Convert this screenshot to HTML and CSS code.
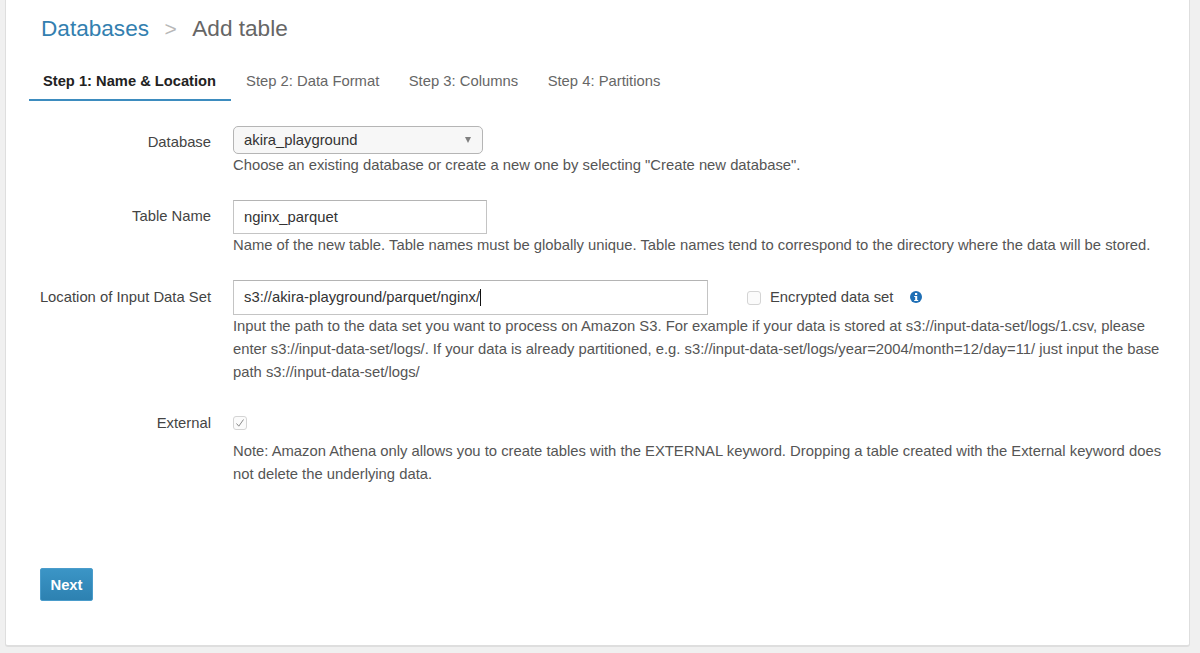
FILE: index.html
```html
<!DOCTYPE html>
<html lang="en">
<head>
  <meta charset="UTF-8">
  <meta name="viewport" content="width=device-width, initial-scale=1.0">
  <title>Add table</title>
  <link rel="stylesheet" href="styles.css">
</head>
<body>

<div class="panel">
  <div class="breadcrumb">
    <a class="crumb-link" href="#">Databases</a>
    <span class="crumb-sep">&gt;</span>
    <span class="crumb-current">Add table</span>
  </div>

  <div class="tabs">
    <div class="tab active">Step 1: Name &amp; Location</div>
    <div class="tab">Step 2: Data Format</div>
    <div class="tab">Step 3: Columns</div>
    <div class="tab">Step 4: Partitions</div>
  </div>

  <div class="form">
    <div class="row row-database">
      <div class="label">Database</div>
      <div class="field">
        <div class="select">
          <span>akira_playground</span>
          <span class="arrow"></span>
        </div>
        <p class="help">Choose an existing database or create a new one by selecting "Create new database".</p>
      </div>
    </div>

    <div class="row row-name">
      <div class="label">Table Name</div>
      <div class="field">
        <div class="input input-name">nginx_parquet</div>
        <p class="help">Name of the new table. Table names must be globally unique. Table names tend to correspond to the directory where the data will be stored.</p>
      </div>
    </div>

    <div class="row row-location">
      <div class="label">Location of Input Data Set</div>
      <div class="field">
        <div class="location-line">
          <div class="input input-location">s3://akira-playground/parquet/nginx/<span class="caret"></span></div>
          <span class="checkbox"></span>
          <span class="check-label">Encrypted data set</span>
          <svg class="info" width="12" height="12" viewBox="0 0 12 12">
            <circle cx="6" cy="6" r="6" fill="#1f6fb5"/>
            <rect x="5" y="2" width="2.2" height="2" fill="#fff"/>
            <path d="M4.2 5h3v4.1h1v1H4.2v-1h1V6h-1z" fill="#fff"/>
          </svg>
        </div>
        <p class="help">Input the path to the data set you want to process on Amazon S3. For example if your data is stored at s3://input-data-set/logs/1.csv, please enter s3://input-data-set/logs/. If your data is already partitioned, e.g. s3://input-data-set/logs/year=2004/month=12/day=11/ just input the base path s3://input-data-set/logs/</p>
      </div>
    </div>

    <div class="row row-external">
      <div class="label">External</div>
      <div class="field">
        <span class="checkbox checked">
          <svg width="10" height="10" viewBox="0 0 10 10">
            <path d="M1.5 5.5L3.8 8.2L8.5 1.5" fill="none" stroke="#8a8a8a" stroke-width="1"/>
          </svg>
        </span>
        <p class="help help-note">Note: Amazon Athena only allows you to create tables with the EXTERNAL keyword. Dropping a table created with the External keyword does not delete the underlying data.</p>
      </div>
    </div>
  </div>

  <button class="next" type="button">Next</button>
</div>

</body>
</html>
```

FILE: styles.css
```css
html, body {
  height: 100%;
}

body {
  font-family: "Liberation Sans", Arial, sans-serif;
  font-size: 14.8px;
  margin: 0;
  padding: 0 10px 6px 5px;
  box-sizing: border-box;
  background-color: #f0f0f0;
  color: #555555;
  overflow: hidden;
}

.panel {
  height: 100%;
  box-sizing: border-box;
  padding: 15px 0 0 0;
  background-color: #ffffff;
  border-right: 1px solid #dedede;
  border-bottom: 2px solid #dedede;
  border-left: 1px solid #dedede;
  border-radius: 0 0 3px 3px;
}

/* Breadcrumb */
.breadcrumb {
  display: flex;
  align-items: baseline;
  margin-left: 35px;
  font-size: 22.6px;
  line-height: 28px;
}

.crumb-link {
  color: #337fb0;
  text-decoration: none;
}

.crumb-sep {
  margin: 0 15.5px 0 15.5px;
  color: #b8b8b8;
  font-size: 21px;
}

.crumb-current {
  color: #666666;
}

/* Tabs */
.tabs {
  display: flex;
  margin: 18px 0 0 23px;
  height: 40px;
}

.tab {
  padding: 11px 14.5px 0 15px;
  line-height: 18px;
  color: #666666;
}

.tab.active {
  padding: 11px 15px 0 14px;
  font-size: 14.7px;
  font-weight: bold;
  color: #222222;
  border-bottom: 2px solid #3d8cbf;
  height: 27px;
}

/* Form rows */
.form {
  margin-top: 25px;
}

.row {
  display: grid;
  grid-template-columns: 205px 1fr;
  column-gap: 22px;
}

.row-name,
.row-location {
  margin-top: 23px;
}

.row-external {
  margin-top: 32px;
}

.label {
  text-align: right;
  color: #444444;
  line-height: 20px;
  padding-top: 6px;
}

.row-location .label {
  padding-top: 7px;
}

.row-external .label {
  padding-top: 0;
  line-height: 14px;
}

.field {
  min-width: 0;
  padding-right: 20px;
}

.help {
  margin: 0;
  line-height: 23px;
  color: #555555;
}

.help-note {
  margin-top: 10px;
}

/* Controls */
.select {
  display: flex;
  justify-content: space-between;
  align-items: center;
  width: 250px;
  height: 28px;
  box-sizing: border-box;
  padding: 0 10px;
  border: 1px solid #b5b5b5;
  border-radius: 5px;
  background-color: #f7f7f7;
  color: #333333;
}

.arrow {
  width: 0;
  height: 0;
  margin-right: 1px;
  border-left: 3px solid transparent;
  border-right: 3px solid transparent;
  border-top: 6px solid #808080;
}

.input {
  box-sizing: border-box;
  height: 35px;
  padding: 0 10px;
  line-height: 33px;
  border: 1px solid #c4c4c4;
  border-top-color: #b4b4b4;
  color: #333333;
}

.input-name {
  width: 254px;
  height: 34px;
  line-height: 32px;
}

.input-location {
  width: 475px;
}

.caret {
  display: inline-block;
  width: 1px;
  height: 17px;
  background-color: #111111;
  vertical-align: -4px;
}

.location-line {
  display: flex;
  align-items: center;
}

.checkbox {
  display: block;
  box-sizing: border-box;
  width: 14px;
  height: 14px;
  border: 1px solid #d4d4d4;
  border-radius: 3px;
  background-color: #fbfbfb;
}

.location-line .checkbox {
  margin-left: 39px;
}

.checkbox.checked {
  display: flex;
  align-items: center;
  justify-content: center;
}

.check-label {
  margin: 0 0 2px 9px;
  color: #444444;
}

.info {
  margin: 0 0 2px 17px;
}

.next {
  display: block;
  margin: 82px 0 0 34px;
  width: 53px;
  height: 33px;
  padding: 0;
  border: 1px solid #4a9ccb;
  border-radius: 2px;
  background: linear-gradient(#3b95c6, #2d81b1);
  color: #ffffff;
  font-family: inherit;
  font-size: 14.8px;
  font-weight: bold;
  cursor: pointer;
}
```
